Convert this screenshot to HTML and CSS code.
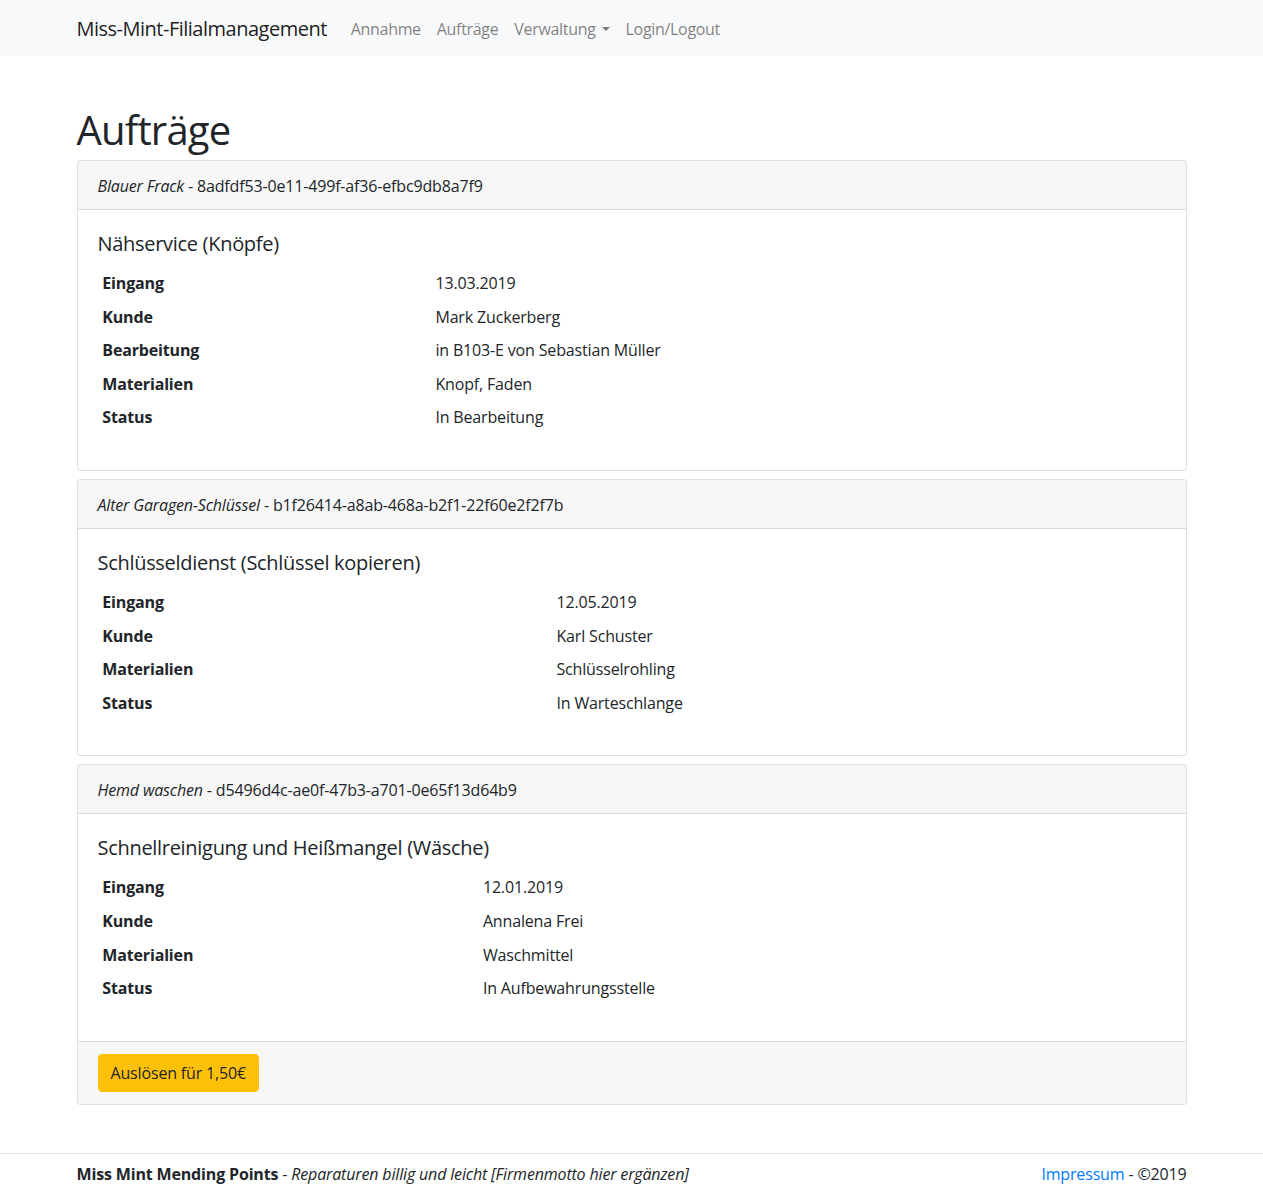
FILE: index.html
```html
<!DOCTYPE html>
<html lang="de">
<head>
<meta charset="utf-8">
<title>Aufträge</title>
<link rel="stylesheet" href="styles.css">
</head>
<body>
<nav class="navbar">
  <div class="container nav-inner">
    <a class="brand" href="#">Miss-Mint-Filialmanagement</a>
    <ul class="nav">
      <li><a class="nav-link" href="#">Annahme</a></li>
      <li><a class="nav-link" href="#">Aufträge</a></li>
      <li><a class="nav-link dropdown" href="#">Verwaltung<span class="caret"></span></a></li>
      <li><a class="nav-link" href="#">Login/Logout</a></li>
    </ul>
  </div>
</nav>

<main class="container main">
  <h1 class="title">Aufträge</h1>

  <div class="card">
    <div class="card-header"><em>Blauer Frack</em> - 8adfdf53-0e11-499f-af36-efbc9db8a7f9</div>
    <div class="card-body">
      <h5 class="card-title">Nähservice (Knöpfe)</h5>
      <table class="table">
        <tr><th>Eingang</th><td>13.03.2019</td></tr>
        <tr><th>Kunde</th><td>Mark Zuckerberg</td></tr>
        <tr><th>Bearbeitung</th><td>in B103-E von Sebastian Müller</td></tr>
        <tr><th>Materialien</th><td>Knopf, Faden</td></tr>
        <tr><th>Status</th><td>In Bearbeitung</td></tr>
      </table>
    </div>
  </div>

  <div class="card">
    <div class="card-header"><em>Alter Garagen-Schlüssel</em> - b1f26414-a8ab-468a-b2f1-22f60e2f2f7b</div>
    <div class="card-body">
      <h5 class="card-title">Schlüsseldienst (Schlüssel kopieren)</h5>
      <table class="table">
        <tr><th>Eingang</th><td>12.05.2019</td></tr>
        <tr><th>Kunde</th><td>Karl Schuster</td></tr>
        <tr><th>Materialien</th><td>Schlüsselrohling</td></tr>
        <tr><th>Status</th><td>In Warteschlange</td></tr>
      </table>
    </div>
  </div>

  <div class="card">
    <div class="card-header"><em>Hemd waschen</em> - d5496d4c-ae0f-47b3-a701-0e65f13d64b9</div>
    <div class="card-body">
      <h5 class="card-title">Schnellreinigung und Heißmangel (Wäsche)</h5>
      <table class="table">
        <tr><th>Eingang</th><td>12.01.2019</td></tr>
        <tr><th>Kunde</th><td>Annalena Frei</td></tr>
        <tr><th>Materialien</th><td>Waschmittel</td></tr>
        <tr><th>Status</th><td>In Aufbewahrungsstelle</td></tr>
      </table>
    </div>
    <div class="card-footer">
      <button class="btn btn-warning" type="button">Auslösen für 1,50€</button>
    </div>
  </div>
</main>

<footer class="footer">
  <div class="container footer-inner">
    <div><strong>Miss Mint Mending Points</strong> - <em>Reparaturen billig und leicht [Firmenmotto hier ergänzen]</em></div>
    <div><a class="link" href="#">Impressum</a> - ©2019</div>
  </div>
</footer>
</body>
</html>
```

FILE: styles.css
```css
* { box-sizing: border-box; }
html, body { margin: 0; padding: 0; }
body {
  font-family: "Open Sans", "Noto Sans", sans-serif;
  font-size: 16px;
  line-height: 1.5;
  letter-spacing: -0.01em;
  color: #212529;
  background: #fff;
}
a { text-decoration: none; }
.container {
  width: 1140px;
  margin: 0 auto;
  padding: 0 15px;
}
.navbar {
  background: #f8f9fa;
  padding: 8px 0;
}
.nav-inner {
  display: flex;
  align-items: center;
}
.brand {
  font-size: 20px;
  line-height: 30px;
  padding: 6px 0 4px;
  margin-right: 16px;
  letter-spacing: -0.025em;
  color: rgba(0,0,0,.9);
}
.nav {
  display: flex;
  list-style: none;
  margin: 0;
  padding: 0;
}
.nav-link {
  display: block;
  padding: 9px 8px 7px;
  letter-spacing: -0.02em;
  color: rgba(0,0,0,.5);
}
.caret {
  display: inline-block;
  margin-left: 6px;
  vertical-align: 4px;
  border-top: 4.8px solid;
  border-right: 4.8px solid transparent;
  border-left: 4.8px solid transparent;
}
.main { padding-top: 48px; }
.title {
  font-size: 40px;
  font-weight: 500;
  line-height: 1.2;
  letter-spacing: -0.02em;
  margin: 0 0 8px;
  padding-top: 2px;
  height: 48px;
}
.card {
  border: 1px solid rgba(0,0,0,.125);
  border-radius: 4px;
  margin-bottom: 8px;
  background: #fff;
  overflow: hidden;
}
.card-header {
  padding: 13px 20px 11px;
  background: rgba(0,0,0,.03);
  border-bottom: 1px solid rgba(0,0,0,.125);
}
.card-body { padding: 20px; }
.card-title {
  font-size: 20px;
  font-weight: 500;
  line-height: 1.2;
  letter-spacing: -0.015em;
  margin: 0 0 12px;
  padding-top: 2px;
  height: 24px;
}
.table {
  width: 100%;
  border-collapse: collapse;
  margin-bottom: 16px;
}
.table th, .table td {
  padding: 5px 4.8px 4.6px;
  text-align: left;
  vertical-align: top;
}
.table th { font-weight: 700; }
.card-footer {
  padding: 12px 20px;
  background: rgba(0,0,0,.03);
  border-top: 1px solid rgba(0,0,0,.125);
}
.btn {
  font-family: inherit;
  font-size: 16px;
  line-height: 1.5;
  letter-spacing: -0.01em;
  padding: 6px 12px;
  border: 1px solid transparent;
  border-radius: 4px;
  cursor: pointer;
}
.btn-warning {
  background: #ffc107;
  border-color: #ffc107;
  color: #212529;
}
.footer {
  margin-top: 48px;
  border-top: 1px solid #dee2e6;
  padding-top: 8px;
}
.footer-inner {
  display: flex;
  justify-content: space-between;
}
.link { color: #007bff; }
```
